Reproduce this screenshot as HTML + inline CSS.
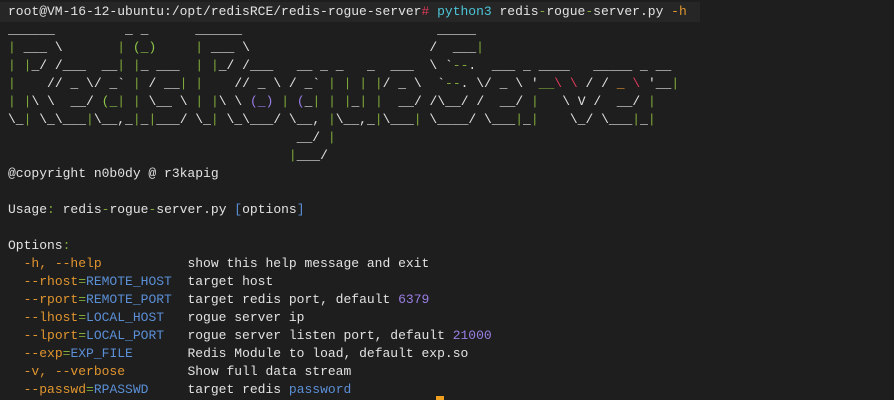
<!DOCTYPE html>
<html><head><meta charset="utf-8"><style>
html,body{margin:0;padding:0;background:#1e1e1e;width:894px;height:400px;overflow:hidden}
pre{margin:0;position:absolute;left:8px;top:3px;font-family:"Liberation Mono",monospace;font-size:13px;line-height:18px;color:#e2e2e2;letter-spacing:0.0px}
.bar{position:absolute;left:0;top:2px;width:700px;height:20px;background:#262626}
.g{color:#7fa93a}.r{color:#e03a5a}.c{color:#4cc4d8}.o{color:#e0952f}.b{color:#5b8fd6}.p{color:#9a7ee6}.gr{color:#8fc54a}
.cur{position:absolute;left:436px;top:396px;width:8px;height:4px;background:#f0a020}
</style></head><body>
<div class="bar"></div>
<pre>root@VM-16-12-ubuntu:/opt/redisRCE/redis-rogue-server<span class="r">#</span> <span class="c">python3</span> redis<span class="g">-</span>rogue<span class="g">-</span>server.py <span class="o">-h</span>
______         _ _      ______                         _____
<span class="g">|</span> ___ \       <span class="g">|</span> <span class="gr">(_)</span>     <span class="g">|</span> ___ \                       /  ___<span class="g">|</span>
<span class="g">|</span> <span class="g">|</span>_/ /___  __<span class="g">|</span> <span class="g">|</span>_ ___  <span class="g">|</span> <span class="g">|</span>_/ /___   __ _ _   _  ___  \ `<span class="g">--</span>.  ___ _ ____   _____ _ __
<span class="g">|</span>    // _ \/ _` <span class="g">|</span> / __<span class="g">|</span> <span class="g">|</span>    // _ \ / _` <span class="g">|</span> <span class="g">|</span> <span class="g">|</span> <span class="g">|</span>/ _ \  `<span class="g">--</span>. \/ _ \ '<span class="g">__</span><span class="r">\ \</span> / / <span class="o">_</span> <span class="r">\</span> '__<span class="g">|</span>
<span class="g">|</span> <span class="g">|</span>\ \  __/ <span class="gr">(_</span><span class="g">|</span> <span class="g">|</span> \__ \ <span class="g">|</span> <span class="g">|</span>\ \ <span class="p">(_)</span> <span class="g">|</span> <span class="p">(</span>_<span class="g">|</span> <span class="g">|</span> <span class="g">|</span>_<span class="g">|</span> <span class="g">|</span>  __/ /\__/ /  __/ <span class="g">|</span>   \ V /  __/ <span class="g">|</span>
\_<span class="g">|</span> \_\___<span class="g">|</span>\__,_<span class="g">|</span>_<span class="g">|</span>___/ \_<span class="g">|</span> \_\___/ \__, <span class="g">|</span>\__,_<span class="g">|</span>\___<span class="g">|</span> \____/ \___<span class="g">|</span>_<span class="g">|</span>    \_/ \___<span class="g">|</span>_<span class="g">|</span>
                                     __/ <span class="g">|</span>
                                    <span class="g">|</span>___/
@copyright n0b0dy @ r3kapig

Usage<span class="g">:</span> redis<span class="g">-</span>rogue<span class="g">-</span>server.py <span class="b">[</span>options<span class="b">]</span>

Options<span class="g">:</span>
  <span class="o">-h, --help</span>           show this help message and exit
  <span class="o">--rhost</span><span class="g">=</span><span class="b">REMOTE_HOST</span>  target host
  <span class="o">--rport</span><span class="g">=</span><span class="b">REMOTE_PORT</span>  target redis port, default <span class="p">6379</span>
  <span class="o">--lhost</span><span class="g">=</span><span class="b">LOCAL_HOST</span>   rogue server ip
  <span class="o">--lport</span><span class="g">=</span><span class="b">LOCAL_PORT</span>   rogue server listen port, default <span class="p">21000</span>
  <span class="o">--exp</span><span class="g">=</span><span class="b">EXP_FILE</span>       Redis Module to load, default exp.so
  <span class="o">-v, --verbose</span>        Show full data stream
  <span class="o">--passwd</span><span class="g">=</span><span class="b">RPASSWD</span>     target redis <span class="b">password</span>
</pre>
<div class="cur"></div>
</body></html>
